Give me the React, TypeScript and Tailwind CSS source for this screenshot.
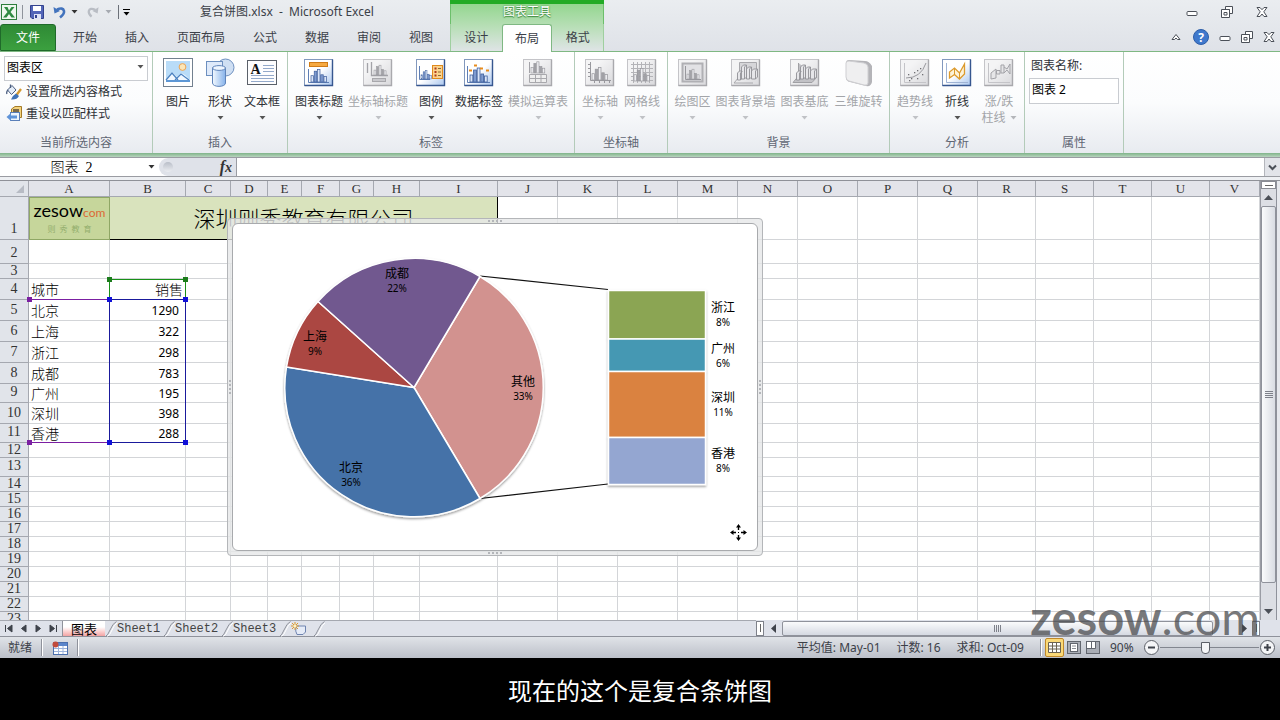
import type { ReactNode } from 'react';

/**
 * @file App.tsx
 * @description Spreadsheet window: ribbon, formula bar, sheet with a bar-of-pie chart, status bar and caption strip.
 */

const UI_FONT = "font-['Noto_Sans','Noto_Sans_CJK_SC',sans-serif]";
const HEAD_FONT = "font-['Liberation_Serif','Noto_Sans_CJK_SC',serif]";

/* ---------- small glyphs ---------- */

function Caret({ className = 'text-[#555]' }: { className?: string }) {
  return (
    <svg width="7" height="4" viewBox="0 0 7 4" className={className} aria-hidden>
      <path d="M0.5 0H6.5L3.5 3.5Z" fill="currentColor" />
    </svg>
  );
}

function MinimizeIcon() {
  return (
    <svg width="12" height="12" viewBox="0 0 12 12" aria-hidden>
      <rect x="1" y="5.5" width="10" height="4" rx="1" fill="#fff" stroke="#4b5058" />
    </svg>
  );
}

function RestoreIcon() {
  return (
    <svg width="12" height="12" viewBox="0 0 12 12" fill="#fff" stroke="#4b5058" aria-hidden>
      <path d="M4.5 0.5H11.5V7.5H8.5V3.5H4.5Z" />
      <path d="M0.5 3.5H8.5V11.5H0.5Z" />
      <path d="M3 6.5H6V9H3Z" />
    </svg>
  );
}

function CloseIcon() {
  return (
    <svg width="12" height="12" viewBox="0 0 12 12" aria-hidden>
      <path
        d="M1 1.5H4L6 3.7L8 1.5H11L7.8 5.8L11 10.5H8L6 8L4 10.5H1L4.2 5.8Z"
        fill="#fff"
        stroke="#4b5058"
      />
    </svg>
  );
}

/* ---------- ribbon icons ---------- */

interface FrameProps {
  off?: boolean;
  children: ReactNode;
}

function Frame({ off, children }: FrameProps) {
  return (
    <svg width="30" height="30" viewBox="0 0 30 30" aria-hidden>
      <defs>
        <linearGradient id="frameOn" x1="0" y1="0" x2="1" y2="1">
          <stop offset="0.5" stopColor="#ffffff" />
          <stop offset="1" stopColor="#a9c6ee" />
        </linearGradient>
        <linearGradient id="frameOff" x1="0" y1="0" x2="1" y2="1">
          <stop offset="0.3" stopColor="#f4f4f5" />
          <stop offset="1" stopColor="#d9d9dc" />
        </linearGradient>
      </defs>
      <rect
        x="0.5"
        y="1.5"
        width="28"
        height="26"
        fill={off ? 'url(#frameOff)' : 'url(#frameOn)'}
        stroke={off ? '#c4c4c8' : '#8298bd'}
      />
      <path d="M28.5 1.5V27.5H0.5" fill="none" stroke={off ? '#a9a9ad' : '#36568f'} strokeWidth="1.4" />
      {children}
    </svg>
  );
}

interface BarsProps {
  x: number;
  y: number;
  off?: boolean;
  scale?: number;
}

/** Five clustered columns standing on y. */
function Bars({ x, y, off, scale = 1 }: BarsProps) {
  const heights = [7, 12, 14, 8, 6];
  return (
    <g transform={`translate(${x} ${y}) scale(${scale})`} strokeWidth="0.8">
      {heights.map((h, i) => (
        <rect
          key={i}
          x={i * 3.6}
          y={-h}
          width="2.8"
          height={h}
          fill={i % 2 ? (off ? '#a3a3a8' : '#7e9bd0') : off ? '#ededf0' : '#dbe6f8'}
          stroke={off ? '#98989d' : '#3f5f9d'}
        />
      ))}
    </g>
  );
}

/** Row of boxes with a slanted top, for the 3-D chart buttons. */
function Blocks() {
  return (
    <g fill="#e6e6e9" stroke="#919196" strokeWidth="0.9">
      <path d="M6.5 22V15L8.5 13H11.5V20L9.5 22Z" />
      <path d="M10.5 21V9L12.5 7H15.5V19L13.5 21Z" />
      <path d="M15.5 21V11L17.5 9H20.5V19L18.5 21Z" />
      <path d="M20.5 21V13L22.5 11H26.5V19L24.500 21Z" />
      <path d="M9.5 22V15L11.5 13M13.5 21V9L15.5 7M18.5 21V11L20.5 9M24.5 21V13L26.5 11" fill="none" />
    </g>
  );
}

function PictureIcon() {
  return (
    <svg width="30" height="30" viewBox="0 0 30 30" aria-hidden>
      <rect x="0.5" y="0.5" width="29" height="28" fill="#fff" stroke="#72808f" />
      <rect x="3" y="3" width="24" height="21" fill="#b9dcf8" />
      <circle cx="19.5" cy="9" r="3.4" fill="#fce6b8" stroke="#eda453" />
      <path d="M3 21L9 14L14 19L18 15L22 17L27 22V24H3Z" fill="#f1f8ff" />
      <path d="M3 22L9 15L15 22M12 22L18 16L26 22" fill="none" stroke="#4c83c2" strokeWidth="1.3" />
      <path d="M3 22H27V24H3Z" fill="#5d97d5" />
    </svg>
  );
}

function ShapesIcon() {
  return (
    <svg width="30" height="30" viewBox="0 0 30 30" aria-hidden>
      <defs>
        <linearGradient id="can" x1="0" x2="1">
          <stop offset="0" stopColor="#f3f9ff" />
          <stop offset="1" stopColor="#86b2ea" />
        </linearGradient>
      </defs>
      <circle cx="20.5" cy="9.5" r="8.5" fill="#cfdff3" stroke="#6d8fbf" />
      <rect x="1.5" y="3.5" width="16" height="14" fill="#dfeafa" stroke="#6d8fbf" />
      <path d="M7.5 10V25C7.5 29.5 20.5 29.5 20.5 25V10Z" fill="url(#can)" stroke="#5f84ba" />
      <ellipse cx="14" cy="10" rx="6.5" ry="2.4" fill="#eef5fe" stroke="#5f84ba" />
    </svg>
  );
}

function TextBoxIcon() {
  return (
    <svg width="30" height="30" viewBox="0 0 30 30" aria-hidden>
      <rect x="0.5" y="2.5" width="29" height="24" fill="#fdfdfe" stroke="#5a6069" />
      <path d="M16 7.5H27M16 10.5H27M16 13.5H27M4 17.5H27M4 20.500H27M4 23.5H27" stroke="#93a9ca" />
      <text x="3.5" y="16" fontFamily="Liberation Serif, serif" fontWeight="700" fontSize="14" fill="#111">
        A
      </text>
    </svg>
  );
}

function ChartTitleIcon() {
  return (
    <Frame>
      <rect x="5.5" y="4.5" width="18" height="4" fill="#f6a941" stroke="#cf7b17" />
      <path d="M4.5 11V24.5H25" fill="none" stroke="#5f7fb5" />
      <Bars x={7} y={24} scale={0.9} />
    </Frame>
  );
}

function AxisTitleIcon() {
  return (
    <Frame off>
      <path d="M4.5 5V15M8.5 4V17.5H25" fill="none" stroke="#a3a3a8" strokeWidth="1.3" />
      <Bars x={11} y={17} off scale={0.7} />
      <rect x="9.5" y="20.5" width="13" height="3" fill="#c9c9cd" stroke="#a8a8ac" />
    </Frame>
  );
}

function LegendIcon() {
  return (
    <Frame>
      <path d="M3.5 8V21.5H14" fill="none" stroke="#5f7fb5" />
      <Bars x={5} y={21} scale={0.6} />
      <rect x="16.5" y="7.5" width="10" height="13" fill="#fbd38c" stroke="#e08a1c" />
      <path d="M18.5 10.5H20.5M18.5 14H20.5M18.5 17.5H20.5" stroke="#b03a1a" strokeWidth="1.8" />
      <path d="M22 10.5H25M22 14H25M22 17.5H25" stroke="#8b6a35" />
    </Frame>
  );
}

function DataLabelIcon() {
  return (
    <Frame>
      <path d="M3.5 8V24.5H26" fill="none" stroke="#5f7fb5" />
      <Bars x={6} y={24} />
      <path d="M5 12.5H8M10 7.5H13M16 10.5H19M22 12.5H25" stroke="#e88c1c" strokeWidth="2.2" />
    </Frame>
  );
}

function DataTableIcon() {
  return (
    <Frame off>
      <path d="M6.5 4V15" stroke="#a3a3a8" />
      <Bars x={8} y={15} off scale={0.8} />
      <path
        d="M6.5 16.5H23.5V24.5H6.5ZM6.5 20.5H23.5M12.5 16.5V24.5M18 16.5V24.5"
        fill="#eee"
        stroke="#a8a8ac"
      />
    </Frame>
  );
}

function AxesIcon() {
  return (
    <Frame off>
      <path
        d="M5.5 4V22.5H26M3 6.5H5M3 10.5H5M3 14.5H5M3 18.5H5M9.5 23V25M14.5 23V25M19.5 23V25M24.5 23V25"
        fill="none"
        stroke="#98989d"
      />
      <Bars x={7} y={22} off scale={0.9} />
    </Frame>
  );
}

function GridlinesIcon() {
  return (
    <Frame off>
      <path
        d="M4 6.5H26M4 10.5H26M4 14.5H26M4 18.5H26M4 22.5H26M6.5 4V25M10.5 4V25M14.5 4V25M18.5 4V25M22.5 4V25"
        stroke="#b4b4b8"
      />
      <Bars x={7} y={23} off scale={0.9} />
    </Frame>
  );
}

function PlotAreaIcon() {
  return (
    <Frame off>
      <rect x="4.5" y="5.5" width="20" height="18" fill="#e2e2e5" stroke="#b0b0b4" strokeWidth="2" />
      <path d="M7.5 8V21.5H23" fill="none" stroke="#98989d" />
      <Bars x={9} y={21} off scale={0.7} />
    </Frame>
  );
}

function ChartWallIcon() {
  return (
    <Frame off>
      <path d="M8.5 4.5H25.5V18.5H8.5Z" fill="#d6d6d9" stroke="#a8a8ac" />
      <path d="M8.5 18.5L3 25H22" fill="none" stroke="#a8a8ac" />
      <Blocks />
    </Frame>
  );
}

function ChartFloorIcon() {
  return (
    <Frame off>
      <path d="M8.5 5V18L3 24.500H22L27 19" fill="#c2c2c6" stroke="#a0a0a4" />
      <Blocks />
    </Frame>
  );
}

function RotateIcon() {
  return (
    <svg width="30" height="30" viewBox="0 0 30 30" aria-hidden>
      <path d="M2 5Q2 2 5 2L21 3Q25 3 28 8V24Q27 29 22 28L6 24Q2 23 2 20Z" fill="#b4b4b8" />
      <path d="M2 5Q2 3 5 3L20 5Q24 6 24 9V25Q24 28 20 27L5 23Q2 22 2 19Z" fill="#efeff0" stroke="#cfcfd2" />
    </svg>
  );
}

const TREND_POINTS = [[8, 16], [11, 20], [14, 14], [17, 20], [20, 10], [22, 16], [9, 22], [17, 12]];

function TrendIcon() {
  return (
    <Frame off>
      <path d="M4.5 5V24.5H26" fill="none" stroke="#c4c4c8" />
      <path d="M6 20Q21 20 26 5" fill="none" stroke="#98989d" />
      {TREND_POINTS.map(([x, y]) => (
        <rect key={`${x}-${y}`} x={x} y={y} width="1.3" height="1.3" fill="#707075" />
      ))}
    </Frame>
  );
}

function LinesIcon() {
  return (
    <Frame>
      <path d="M4.5 5V24.5H26" fill="none" stroke="#9fb3d4" />
      <path
        d="M7.5 20V14L12.5 10L17.5 15L22.5 6V16L17.5 21L12.5 16.5Z"
        fill="#fdf3d9"
        stroke="#dc9a2c"
        strokeWidth="1.3"
      />
      <path d="M12.5 10V17M17.5 15V21" stroke="#dc9a2c" />
    </Frame>
  );
}

function UpDownIcon() {
  return (
    <Frame off>
      <path d="M4.5 5V24.5H26" fill="none" stroke="#c4c4c8" />
      <path
        d="M7 21V15L12 11V20ZM12.5 12.5H16V16H12.5ZM17 7H20V15H17ZM20 9L23 11L26 6V16L23 12L20 15"
        fill="#e6e6e8"
        stroke="#a3a3a8"
      />
    </Frame>
  );
}

/* ---------- ribbon ---------- */

interface RibbonItem {
  label: string;
  width: string;
  icon: ReactNode;
  off?: boolean;
  noMenu?: boolean;
  second?: string;
}

interface RibbonGroupData {
  title: string;
  width: string;
  items: RibbonItem[];
}

const GROUPS: RibbonGroupData[] = [
  {
    title: '插入',
    width: 'w-[135px]',
    items: [
      { label: '图片', width: 'w-[42px]', icon: <PictureIcon />, noMenu: true },
      { label: '形状', width: 'w-[42px]', icon: <ShapesIcon /> },
      { label: '文本框', width: 'w-[42px]', icon: <TextBoxIcon /> },
    ],
  },
  {
    title: '标签',
    width: 'w-[287px]',
    items: [
      { label: '图表标题', width: 'w-[54px]', icon: <ChartTitleIcon /> },
      { label: '坐标轴标题', width: 'w-[64px]', icon: <AxisTitleIcon />, off: true },
      { label: '图例', width: 'w-[42px]', icon: <LegendIcon /> },
      { label: '数据标签', width: 'w-[54px]', icon: <DataLabelIcon /> },
      { label: '模拟运算表', width: 'w-[64px]', icon: <DataTableIcon />, off: true },
    ],
  },
  {
    title: '坐标轴',
    width: 'w-[93px]',
    items: [
      { label: '坐标轴', width: 'w-[42px]', icon: <AxesIcon />, off: true },
      { label: '网格线', width: 'w-[42px]', icon: <GridlinesIcon />, off: true },
    ],
  },
  {
    title: '背景',
    width: 'w-[222px]',
    items: [
      { label: '绘图区', width: 'w-[42px]', icon: <PlotAreaIcon />, off: true },
      { label: '图表背景墙', width: 'w-[64px]', icon: <ChartWallIcon />, off: true },
      { label: '图表基底', width: 'w-[54px]', icon: <ChartFloorIcon />, off: true },
      { label: '三维旋转', width: 'w-[54px]', icon: <RotateIcon />, off: true, noMenu: true },
    ],
  },
  {
    title: '分析',
    width: 'w-[135px]',
    items: [
      { label: '趋势线', width: 'w-[42px]', icon: <TrendIcon />, off: true },
      { label: '折线', width: 'w-[42px]', icon: <LinesIcon /> },
      { label: '涨/跌', width: 'w-[42px]', icon: <UpDownIcon />, off: true, second: '柱线' },
    ],
  },
];

function RibbonGroup({ title, width, children }: { title: string; width: string; children: ReactNode }) {
  return (
    <section className={`flex shrink-0 flex-col border-r border-[#b3cbb9] ${width}`} aria-label={title}>
      <div className="flex-1">{children}</div>
      <h2 className="pb-0.5 text-center text-[12px] leading-4 text-[#5f6673]">{title}</h2>
    </section>
  );
}

function RibbonButton({ label, width, icon, off, noMenu, second }: RibbonItem) {
  const tone = off ? 'text-[#a3a5a9]' : 'text-[#2e3136]';
  return (
    <button type="button" disabled={off} className={`flex shrink-0 flex-col items-center ${width} ${tone}`}>
      {icon}
      <span className="mt-1.5 whitespace-nowrap text-[12px] leading-4">{label}</span>
      {second ? (
        <span className="flex items-center gap-1 whitespace-nowrap text-[12px] leading-4">
          {second}
          <Caret className="text-[#b4b6ba]" />
        </span>
      ) : (
        !noMenu && (
          <span className="pt-1.5">
            <Caret className={off ? 'text-[#c0c2c6]' : 'text-[#555]'} />
          </span>
        )
      )}
    </button>
  );
}

function Ribbon() {
  return (
    <div className="flex h-[102px] shrink-0 overflow-hidden border-t border-[#7fb883] bg-gradient-to-b from-white via-[#fbfcfd] to-[#e8ebf0]">
      <RibbonGroup title="当前所选内容" width="w-[153px]">
        <div className="flex flex-col px-1 pt-0.5">
          <div className="relative">
            <select
              aria-label="图表元素"
              className="h-[25px] w-full appearance-none border border-[#c9ccd1] bg-white px-0.5 text-[12px] text-black"
            >
              <option>图表区</option>
            </select>
            <span className="pointer-events-none absolute inset-y-0 right-1 flex items-center">
              <Caret />
            </span>
          </div>
          <button type="button" className="flex h-[22px] items-center gap-1 pl-0.5 text-[12px] text-[#2e3136]">
            <svg width="16" height="16" viewBox="0 0 16 16" aria-hidden>
              <path d="M1.500 6L6 1.500L10 6L5.500 10.500Z" fill="#e3ecf8" stroke="#4b5e80" />
              <path d="M4.5 4V0.5M2 6Q0 8 1 10" fill="none" stroke="#4b5e80" strokeWidth="1.3" />
              <path d="M15 5L10.500 11" stroke="#d59a32" strokeWidth="2.4" />
              <path d="M10 9.500Q7 11 5 15.500Q11 16 13 12Z" fill="#3f73b8" />
            </svg>
            设置所选内容格式
          </button>
          <button type="button" className="flex h-[22px] items-center gap-1 pl-0.5 text-[12px] text-[#2e3136]">
            <svg width="16" height="16" viewBox="0 0 16 16" aria-hidden>
              <path d="M5.500 3L9 0.500H15.500V11.500H5.500Z" fill="#f3d27c" stroke="#a57b26" />
              <path d="M7 3H13V6H7Z" fill="#7d6a4a" />
              <rect x="4.500" y="6.500" width="9" height="8" fill="#eef4fc" stroke="#5b7fb8" />
              <path d="M0.500 11L5 7V9.500H11V12.500H5V15Z" fill="#5f93d8" />
            </svg>
            重设以匹配样式
          </button>
        </div>
      </RibbonGroup>

      {GROUPS.map((group) => (
        <RibbonGroup key={group.title} title={group.title} width={group.width}>
          <div className="flex justify-center pt-1.5">
            {group.items.map((item) => (
              <RibbonButton key={item.label} {...item} />
            ))}
          </div>
        </RibbonGroup>
      ))}

      <RibbonGroup title="属性" width="w-[99px]">
        <label className="flex flex-col gap-1 px-1 pt-1.5 text-[12px] leading-4 text-[#2e3136]">
          <span className="pl-0.5">图表名称:</span>
          <input
            type="text"
            defaultValue="图表 2"
            className="h-[26px] w-full border border-[#c9ccd1] bg-white px-0.5 pb-1 text-[12px] text-black"
          />
        </label>
      </RibbonGroup>
    </div>
  );
}

/* ---------- title bar and tabs ---------- */

const MAIN_TABS = ['开始', '插入', '页面布局', '公式', '数据', '审阅', '视图'];

function Header() {
  return (
    <header className="flex h-[51px] shrink-0 bg-gradient-to-b from-[#eaedf0] to-[#dfe2e8] text-[12px] text-[#3b4048]">
      <div className="flex w-[450px] shrink-0 flex-col">
        <div className="flex h-6 items-center">
          <div className="flex w-[200px] shrink-0 items-center">
            <svg width="18" height="18" viewBox="0 0 18 18" aria-hidden>
              <rect x="1.5" y="1.5" width="15" height="15" fill="#eef7ee" stroke="#2e7d3c" />
              <path d="M4 4H7.5L9 7.500L11.500 4H14.500L10.500 9L15 14.500H11.500L9 11L6.500 14.500H3L7.500 9Z" fill="#2f8a41" />
            </svg>
            <span className="ml-1 h-3.5 w-px bg-[#8e939b]" />
            <button type="button" aria-label="保存" className="ml-1.5">
              <svg width="16" height="16" viewBox="0 0 16 16" aria-hidden>
                <path d="M1.5 1.5H14.5V14.5H3L1.5 13Z" fill="#5366b8" stroke="#33428e" />
                <rect x="4" y="2" width="8" height="5" fill="#fff" />
                <rect x="5" y="10" width="7" height="5" fill="#dfe4f5" />
                <rect x="6" y="11" width="2" height="3" fill="#33428e" />
              </svg>
            </button>
            <button type="button" aria-label="撤消" className="ml-2 flex items-center gap-1">
              <svg width="14" height="14" viewBox="0 0 14 14" aria-hidden>
                <path d="M4 4.5Q10 2 11 6Q11.5 9 7 12.5" fill="none" stroke="#4273bd" strokeWidth="2.6" />
                <path d="M0.5 2L1.5 8.5L7 6Z" fill="#4273bd" />
              </svg>
              <Caret className="text-[#333]" />
            </button>
            <button type="button" aria-label="恢复" className="ml-2 flex items-center gap-1.5">
              <svg width="13" height="14" viewBox="0 0 14 14" aria-hidden>
                <path d="M10 4.5Q4 2 3 6Q2.5 9 6 12" fill="none" stroke="#b9bdc4" strokeWidth="2.4" />
                <path d="M13.5 2L12.5 8.5L7 6Z" fill="#b9bdc4" />
              </svg>
              <Caret className="text-[#a6aab1]" />
            </button>
            <span className="ml-1.5 h-3.5 w-px bg-[#6b7078]" />
            <button type="button" aria-label="自定义快速访问工具栏" className="ml-1 flex flex-col items-center gap-0.5">
              <span className="h-px w-[7px] bg-black" />
              <Caret className="text-black" />
            </button>
          </div>
          <h1 className="whitespace-pre text-[12px]">复合饼图.xlsx  -  Microsoft Excel</h1>
        </div>
        <nav className="flex flex-1">
          <button
            type="button"
            className="mr-[3px] w-14 rounded-t-[3px] border border-[#1f6a2a] bg-gradient-to-b from-[#2f8a35] to-[#3ba03f] text-white"
          >
            文件
          </button>
          {MAIN_TABS.map((tab) => (
            <button key={tab} type="button" className="px-3.5">
              {tab}
            </button>
          ))}
        </nav>
      </div>

      <div className="flex w-[154px] shrink-0 flex-col border-t-4 border-[#22ab25] bg-gradient-to-b from-[#93d68f] via-[#b9dfb8] to-[#dfe4e6]">
        <p className="flex h-5 items-start justify-center border-x border-[#6cbf6b] leading-4 text-white [text-shadow:0_0_2px_#3f8a3f,0_1px_1px_#3f8a3f]">
          图表工具
        </p>
        <nav className="grid flex-1 grid-cols-3 border-x border-[#9fcf9f]">
          <button type="button">设计</button>
          <button
            type="button"
            className="relative -mb-px rounded-t-[3px] border border-b-0 border-[#7fb883] bg-white"
          >
            布局
          </button>
          <button type="button">格式</button>
        </nav>
      </div>

      <div className="flex flex-1 flex-col items-end">
        <div className="flex h-[23px] items-center gap-[23px] pr-3">
          <button type="button" aria-label="最小化"><MinimizeIcon /></button>
          <button type="button" aria-label="还原"><RestoreIcon /></button>
          <button type="button" aria-label="关闭"><CloseIcon /></button>
        </div>
        <div className="flex flex-1 items-center gap-2.5 pr-[5px]">
          <button type="button" aria-label="折叠功能区" className="mr-0.5">
            <svg width="10" height="8" viewBox="0 0 10 8" aria-hidden>
              <path d="M1 6.5L5 1.5L9 6.5H6.5L5 5L3.5 6.5Z" fill="#fff" stroke="#4b5058" />
            </svg>
          </button>
          <button type="button" aria-label="帮助">
            <svg width="16" height="16" viewBox="0 0 16 16" aria-hidden>
              <circle cx="8" cy="8" r="7.5" fill="#3f78cc" stroke="#2d5ea8" />
              <text x="8" y="12.5" textAnchor="middle" fontSize="12" fontWeight="700" fill="#fff">?</text>
            </svg>
          </button>
          <button type="button" aria-label="最小化工作簿"><MinimizeIcon /></button>
          <button type="button" aria-label="还原工作簿"><RestoreIcon /></button>
          <button type="button" aria-label="关闭工作簿"><CloseIcon /></button>
        </div>
      </div>
    </header>
  );
}

function FormulaBar() {
  return (
    <>
      <div className="h-1 shrink-0 bg-gradient-to-b from-[#7fb489] to-[#b9d4bf]" />
      <div className="flex h-5 shrink-0 border-y border-[#9a9ca2] bg-white">
        <input
          type="text"
          aria-label="名称框"
          defaultValue="图表  2"
          className={`w-[143px] pt-0.5 text-center text-[14px] font-light leading-4 text-black ${HEAD_FONT}`}
        />
        <button type="button" aria-label="名称列表" className="flex w-4 items-center justify-center">
          <Caret className="text-[#333]" />
        </button>
        <div className="flex w-[78px] items-center justify-between rounded-l-full border-r border-[#9a9ca2] bg-[#dfe2e9] pl-1 pr-1">
          <span className="size-2.5 rounded-full bg-gradient-to-b from-[#b9bec8] to-[#eceef2]" />
          <button
            type="button"
            aria-label="插入函数"
            className="font-['Liberation_Serif',serif] text-[16px] font-bold italic leading-4 text-[#333]"
          >
            f<span className="text-[14px]">x</span>
          </button>
        </div>
        <input type="text" aria-label="编辑栏" className="min-w-0 flex-1 px-1 text-[12px]" />
        <button
          type="button"
          aria-label="展开编辑栏"
          className="flex w-4 items-center justify-center border-l border-[#b4b6bc] bg-[#e2e4e9]"
        >
          <svg width="9" height="7" viewBox="0 0 9 7" aria-hidden>
            <path d="M1 1.5L4.5 5L8 1.5" fill="none" stroke="#4b5058" strokeWidth="2" />
          </svg>
        </button>
      </div>
      <div className="h-1 shrink-0 border-b border-[#8f9198] bg-[#eef0f3]" />
    </>
  );
}

/* ---------- sheet ---------- */

const COLUMNS: [string, number | undefined][] = [
  ['A', 81], ['B', 76], ['C', 45], ['D', 37], ['E', 34], ['F', 38], ['G', 34], ['H', 46], ['I', 78],
  ['J', 60], ['K', 60], ['L', 60], ['M', 60], ['N', 60], ['O', 60], ['P', 60], ['Q', 60],
  ['R', 58], ['S', 58], ['T', 58], ['U', 58], ['V', undefined],
];

const ROW_HEIGHTS = [43, 24, 15, 21, 21, 21, 21, 21, 19, 21, 19, 15, 19, 15, 15, 15, 15, 15, 15, 15, 15, 15, 15];

const DATA: Record<number, [string, string]> = {
  4: ['城市', '销售'],
  5: ['北京', '1290'],
  6: ['上海', '322'],
  7: ['浙江', '298'],
  8: ['成都', '783'],
  9: ['广州', '195'],
  10: ['深圳', '398'],
  11: ['香港', '288'],
};

const CELL = 'border-b border-r border-[#d3d5d8] p-0';

function SheetRow({ row, height }: { row: number; height: number }) {
  const entry = DATA[row];
  const rest = COLUMNS.slice(row <= 2 ? 9 : 2);
  return (
    <tr style={{ height }}>
      <th
        scope="row"
        className={`border-b border-r border-[#a5a8b0] bg-[#e1e4ea] p-0 align-bottom text-[14px] font-normal leading-[14px] text-[#333] ${HEAD_FONT}`}
      >
        <div className={height > 15 ? 'h-[17px]' : 'h-[14px]'}>{row}</div>
      </th>
      {row === 1 && (
        <>
          <td className="border border-[#8fa765] bg-[#c6d69b] p-0 text-center align-top">
            <div className="flex flex-col items-center font-['Lato',sans-serif] leading-6">
              <span className="text-[18px] text-black">
                zesow<span className="text-[12px] text-[#dc6a35]">com</span>
              </span>
              <span className="flex gap-1 font-['Noto_Sans_CJK_SC',sans-serif] text-[8px] leading-[8px] text-[#93ae6d]">
                <span>则</span><span>秀</span><span>教</span><span>育</span>
              </span>
            </div>
          </td>
          <td
            colSpan={8}
            className="border-b border-r border-black bg-[#d9e3bd] p-0 text-center text-[22px] font-light leading-8 text-black"
          >
            深圳则秀教育有限公司
          </td>
        </>
      )}
      {row === 2 && (
        <>
          <td className={CELL} />
          <td colSpan={8} className={CELL} />
        </>
      )}
      {row > 2 && (
        <>
          <td className={`${CELL} pl-0.5 pt-0.5 text-left text-[14px] font-light leading-4 text-black`}>
            {entry?.[0]}
          </td>
          <td
            className={`${CELL} pt-0.5 text-right leading-4 text-black ${
              row === 4 ? 'pr-0.5 text-[14px] font-light' : 'pr-1.5 text-[12px]'
            }`}
          >
            {entry?.[1]}
          </td>
        </>
      )}
      {rest.map(([name]) => (
        <td key={name} className={CELL} />
      ))}
    </tr>
  );
}

function Handles({ className }: { className: string }) {
  return (
    <>
      <i className={`absolute -left-[3px] -top-[3px] size-[5px] ${className}`} />
      <i className={`absolute -right-[3px] -top-[3px] size-[5px] ${className}`} />
      <i className={`absolute -bottom-[3px] -left-[3px] size-[5px] ${className}`} />
      <i className={`absolute -bottom-[3px] -right-[3px] size-[5px] ${className}`} />
    </>
  );
}

/** Coloured outlines round the ranges that feed the chart. */
function RangeOutlines() {
  return (
    <>
      <div className="absolute left-[109px] top-[98px] h-[21px] w-[77px] border border-[#189018]">
        <Handles className="bg-[#1c7c1c]" />
      </div>
      <div className="absolute left-[30px] top-[118px] h-[144px] w-[79px] border-y border-[#7b1fa2]">
        <Handles className="bg-[#7b1fa2]" />
      </div>
      <div className="absolute left-[109px] top-[118px] h-[144px] w-[77px] border border-[#1a1a9c]">
        <Handles className="bg-[#1010d8]" />
      </div>
    </>
  );
}

/* ---------- chart ---------- */

const CX = 414;
const CY = 387.5;
const R = 129;

const SLICES = [
  { name: '其他', pct: '33%', color: '#d2928f', from: [480, 276.5], to: [480, 498.5], at: [523, 386] },
  { name: '北京', pct: '36%', color: '#4472a8', from: [480, 498.5], to: [286.5, 367], at: [351, 472] },
  { name: '上海', pct: '9%', color: '#ab4643', from: [286.5, 367], to: [318, 301.5], at: [315, 341] },
  { name: '成都', pct: '22%', color: '#71588f', from: [318, 301.5], to: [480, 276.5], at: [397, 278] },
];

const SEGMENTS = [
  { name: '浙江', pct: '8%', color: '#8ba552', y: 290.5, h: 48.5, labelY: 312 },
  { name: '广州', pct: '6%', color: '#4498b3', y: 339, h: 32.5, labelY: 353 },
  { name: '深圳', pct: '11%', color: '#da823f', y: 371.5, h: 66, labelY: 402 },
  { name: '香港', pct: '8%', color: '#94a6d1', y: 437.5, h: 47, labelY: 458 },
];

function ChartLabel({ x, y, name, pct }: { x: number; y: number; name: string; pct: string }) {
  return (
    <g textAnchor="middle" fill="#000">
      <text x={x} y={y} fontSize="12">{name}</text>
      <text x={x} y={y + 14} fontSize="10">{pct}</text>
    </g>
  );
}

function BarOfPie() {
  return (
    <svg
      viewBox="233 224 524 326"
      width="524"
      height="326"
      role="img"
      aria-label="各城市销售占比"
      className="rounded-[8px] bg-white"
    >
      <defs>
        <filter id="soft" x="-10%" y="-10%" width="120%" height="120%">
          <feDropShadow dx="0" dy="1.5" stdDeviation="1.2" floodColor="#000" floodOpacity="0.4" />
        </filter>
      </defs>
      <path d="M480 276L608 289.5M480 498.5L608 484" stroke="#111" strokeWidth="1.2" />
      <g filter="url(#soft)" stroke="#fff" strokeWidth="1.5" strokeLinejoin="round">
        {SLICES.map((s) => (
          <path
            key={s.name}
            d={`M${CX} ${CY}L${s.from[0]} ${s.from[1]}A${R} ${R} 0 0 1 ${s.to[0]} ${s.to[1]}Z`}
            fill={s.color}
          />
        ))}
      </g>
      <g filter="url(#soft)" stroke="#fff" strokeWidth="1.5">
        {SEGMENTS.map((s) => (
          <rect key={s.name} x="608.5" y={s.y} width="97" height={s.h} fill={s.color} />
        ))}
      </g>
      {SLICES.map((s) => (
        <ChartLabel key={s.name} x={s.at[0]} y={s.at[1]} name={s.name} pct={s.pct} />
      ))}
      {SEGMENTS.map((s) => (
        <ChartLabel key={s.name} x={723} y={s.labelY} name={s.name} pct={s.pct} />
      ))}
      {/* move cursor */}
      <path d="M738.5 527V530M738.5 535V538M733 532.5H736M741 532.5H744" stroke="#000" strokeWidth="1.4" />
      <path d="M738.5 524L741 527.5H736ZM738.5 541L741 537.5H736ZM730 532.5L733.5 530V535ZM747 532.5L743.5 530V535Z" />
      <path d="M738 532h1v1h-1z" />
    </svg>
  );
}

function Grip({ className }: { className: string }) {
  return (
    <span className={`absolute flex gap-[2px] ${className}`}>
      <i className="size-[2px] bg-[#b4b6ba]" />
      <i className="size-[2px] bg-[#b4b6ba]" />
      <i className="size-[2px] bg-[#b4b6ba]" />
      <i className="size-[2px] bg-[#b4b6ba]" />
    </span>
  );
}

function ChartObject() {
  return (
    <div className="absolute left-[227px] top-[37px] rounded-[4px] border border-[#b4b6b9] bg-[#e6e7e9]/80 p-1">
      <div className="overflow-hidden rounded-[6px] border border-[#a8aaad] bg-white">
        <BarOfPie />
      </div>
      <Grip className="left-1/2 top-px -translate-x-1/2" />
      <Grip className="bottom-px left-1/2 -translate-x-1/2" />
      <Grip className="left-px top-1/2 -translate-y-1/2 flex-col" />
      <Grip className="right-px top-1/2 -translate-y-1/2 flex-col" />
    </div>
  );
}

function VerticalScroll() {
  return (
    <div className="flex w-5 shrink-0 border-l border-[#9a9ca4] bg-[#dcdee4]">
      <div className="flex w-[15px] flex-col items-center">
        <span className="flex h-2 w-[15px] items-center justify-center border border-[#8a8c94] bg-white">
          <i className="h-px w-2 bg-[#666]" />
        </span>
        <button type="button" aria-label="向上滚动" className="flex h-[17px] items-center">
          <svg width="9" height="5" viewBox="0 0 9 5" aria-hidden><path d="M0 5H9L4.5 0Z" fill="#4b4f57" /></svg>
        </button>
        <div className="flex w-full flex-1 flex-col items-center justify-center gap-px rounded-[2px] border border-[#8f929b] bg-gradient-to-r from-[#fafbfc] to-[#d9dce3]">
          <i className="h-px w-2 bg-[#7e818a]" />
          <i className="h-px w-2 bg-[#7e818a]" />
          <i className="h-px w-2 bg-[#7e818a]" />
          <i className="h-px w-2 bg-[#7e818a]" />
        </div>
        <div className="h-5" />
        <button type="button" aria-label="向下滚动" className="flex h-[17px] items-center">
          <svg width="9" height="5" viewBox="0 0 9 5" aria-hidden><path d="M0 0H9L4.5 5Z" fill="#4b4f57" /></svg>
        </button>
      </div>
      <div className="flex-1 border-l border-[#8f929b] bg-[#e6e8ed]" />
    </div>
  );
}

function Sheet() {
  return (
    <main className="flex min-h-0 flex-1">
      <div className="relative min-w-0 flex-1 overflow-hidden bg-white">
        <table className="w-full table-fixed border-separate border-spacing-0">
          <colgroup>
            <col className="w-[29px]" />
            {COLUMNS.map(([name, width]) => (
              <col key={name} style={{ width }} />
            ))}
          </colgroup>
          <thead>
            <tr className="h-4">
              <th className="border-b border-r border-[#a5a8b0] bg-[#e1e4ea] p-0">
                <svg width="8" height="8" viewBox="0 0 8 8" className="ml-auto mr-1" aria-hidden>
                  <path d="M8 0V8H0Z" fill="#b7bbc4" />
                </svg>
              </th>
              {COLUMNS.map(([name]) => (
                <th
                  key={name}
                  scope="col"
                  className={`border-b border-r border-[#a5a8b0] bg-[#e3e4ea] p-0 text-[13px] font-normal leading-[15px] text-[#333] ${HEAD_FONT}`}
                >
                  {name}
                </th>
              ))}
            </tr>
          </thead>
          <tbody>
            {ROW_HEIGHTS.map((height, i) => (
              <SheetRow key={i} row={i + 1} height={height} />
            ))}
          </tbody>
        </table>
        <RangeOutlines />
        <ChartObject />
      </div>
      <VerticalScroll />
    </main>
  );
}

/* ---------- bottom bars ---------- */

function Slash() {
  return (
    <svg width="12" height="17" viewBox="0 0 12 17" className="shrink-0" aria-hidden>
      <path d="M0.5 15.5Q3 14 5 9Q8 2 11.5 0.5" fill="none" stroke="#8f929b" />
      <path d="M2.5 15.5Q5 14 7 9Q9 4 12 2" fill="none" stroke="#fff" />
    </svg>
  );
}

const NAV_ARROWS = [
  { name: '第一张', d: 'M1.5 1V8M8 1V8L3.5 4.5Z' },
  { name: '上一张', d: 'M7 1V8L2.5 4.5Z' },
  { name: '下一张', d: 'M3 1V8L7.5 4.5Z' },
  { name: '最后一张', d: 'M8.5 1V8M2 1V8L6.5 4.5Z' },
];

function SheetTabs() {
  return (
    <div className="relative flex h-[17px] shrink-0 border-b border-[#8f929b] bg-[#dfe2ea]">
      <div className="flex grow-[756] basis-0 border-t border-[#a5a8b0]">
        <div className="flex w-[63px] shrink-0 items-center justify-between border-r border-[#8f929b] px-1">
          {NAV_ARROWS.map((a) => (
            <button key={a.name} type="button" aria-label={a.name}>
              <svg width="10" height="9" viewBox="0 0 10 9" aria-hidden>
                <path d={a.d} fill="#3f434b" stroke="#3f434b" />
              </svg>
            </button>
          ))}
        </div>
        <button
          type="button"
          className="w-[42px] bg-gradient-to-b from-white from-40% to-[#f2a3a3] pt-px text-center text-[13px] leading-[14px] text-black"
        >
          图表
        </button>
        <Slash />
        {['Sheet1', 'Sheet2', 'Sheet3'].map((name) => (
          <div key={name} className="flex">
            <button
              type="button"
              className="w-[46px] pt-px text-left font-['Liberation_Mono',monospace] text-[12px] leading-[14px] text-[#444]"
            >
              {name}
            </button>
            <Slash />
          </div>
        ))}
        <button type="button" aria-label="插入工作表" className="flex w-[22px] items-center">
          <svg width="16" height="14" viewBox="0 0 16 14" aria-hidden>
            <path d="M5 4H14.5V10L12 12.5H6Q4 10 5 4Z" fill="#e5ebf7" stroke="#6f84b0" />
            <path d="M4 0V8M0 4H8M1 1L7 7M7 1L1 7" stroke="#dd9a2d" />
            <circle cx="4" cy="4" r="1.5" fill="#fff2c2" />
          </svg>
        </button>
        <Slash />
      </div>
      <div className="flex grow-[524] basis-0 items-center">
        <span className="flex h-[15px] w-2 items-center justify-center border border-[#7e818a] bg-white">
          <i className="h-2 w-px bg-[#666]" />
        </span>
        <button type="button" aria-label="向左滚动" className="flex w-[18px] justify-center">
          <svg width="5" height="9" viewBox="0 0 5 9" aria-hidden><path d="M5 0V9L0 4.5Z" fill="#3f434b" /></svg>
        </button>
        <div className="flex h-[15px] flex-1 items-center justify-center gap-px rounded-[2px] border border-[#8f929b] bg-gradient-to-b from-[#fafbfc] to-[#d5d9e2]">
          <i className="h-[7px] w-px bg-[#7e818a]" />
          <i className="h-[7px] w-px bg-[#7e818a]" />
          <i className="h-[7px] w-px bg-[#7e818a]" />
          <i className="h-[7px] w-px bg-[#7e818a]" />
        </div>
        <button type="button" aria-label="向右滚动" className="ml-6 flex w-[15px] justify-center">
          <svg width="5" height="9" viewBox="0 0 5 9" aria-hidden><path d="M0 0V9L5 4.5Z" fill="#3f434b" /></svg>
        </button>
        <span className="mr-5 flex h-[15px] w-2 items-center justify-center border border-[#7e818a] bg-white">
          <i className="h-2 w-px bg-[#666]" />
        </span>
      </div>
      <p className="pointer-events-none absolute bottom-0 right-5 font-['Lato',sans-serif] text-[47px] leading-[37px] text-[#4c4d50]/75">
        <span className="font-bold">zesow</span>.com
      </p>
    </div>
  );
}

function Divider() {
  return <span className="h-[17px] w-px bg-[#8f929b] shadow-[1px_0_0_#fff]" />;
}

function StatusBar() {
  return (
    <footer className="flex h-[21px] shrink-0 items-center bg-gradient-to-b from-[#e0e3e8] to-[#bcc0c9] text-[12px] leading-4 text-[#3b4048]">
      <span className="w-[41px] pl-2">就绪</span>
      <Divider />
      <button type="button" aria-label="录制宏" className="flex w-[35px] justify-center">
        <svg width="16" height="14" viewBox="0 0 16 14" aria-hidden>
          <rect x="1.5" y="1.5" width="14" height="12" fill="#fff" stroke="#4c70ae" />
          <rect x="2" y="2" width="13" height="3" fill="#5c86cb" />
          <path d="M2 7.5H15M2 10.5H15M6.5 5V13M11 5V13" stroke="#9db4dc" />
          <circle cx="3.5" cy="3.5" r="3" fill="#c14b3c" />
        </svg>
      </button>
      <Divider />
      <div className="ml-auto flex items-center gap-4">
        <span>平均值: May-01</span>
        <span>计数: 16</span>
        <span>求和: Oct-09</span>
        <Divider />
      </div>
      <div className="ml-1 flex items-center">
        <button
          type="button"
          aria-label="普通"
          className="flex size-[19px] items-center justify-center rounded-[2px] border border-[#c0892a] bg-[#fbd977]"
        >
          <svg width="13" height="11" viewBox="0 0 13 11" aria-hidden>
            <path
              d="M0.5 0.5H12.5V10.5H0.5ZM0.5 4H12.5M0.5 7H12.5M4.5 0.5V10.5M8.5 0.5V10.5"
              fill="#fff"
              stroke="#6b6250"
            />
          </svg>
        </button>
        <button type="button" aria-label="页面布局视图" className="flex w-[19px] justify-center">
          <svg width="14" height="13" viewBox="0 0 14 13" aria-hidden>
            <rect x="0.5" y="0.5" width="13" height="12" fill="#a9adb5" stroke="#62666e" />
            <rect x="3.5" y="2.5" width="7" height="8" fill="#fff" stroke="#62666e" />
            <path d="M5 5H9M5 7.5H9" stroke="#8a8d94" />
          </svg>
        </button>
        <button type="button" aria-label="分页预览" className="flex w-[19px] justify-center">
          <svg width="14" height="13" viewBox="0 0 14 13" aria-hidden>
            <rect x="0.5" y="0.5" width="13" height="12" fill="#a9adb5" stroke="#62666e" />
            <path d="M1 1H5V7H1ZM6 1H9V7H6Z" fill="#fff" />
            <path d="M5.5 1V7.5M1 7.5H9.5V1" fill="none" stroke="#62666e" />
          </svg>
        </button>
      </div>
      <span className="ml-2 w-[33px]">90%</span>
      <button type="button" aria-label="缩小">
        <svg width="17" height="17" viewBox="0 0 17 17" aria-hidden>
          <circle cx="8.5" cy="8.5" r="7" fill="#f4f5f7" stroke="#5b5f67" />
          <path d="M5 8.5H12" stroke="#3f434b" strokeWidth="2" />
        </svg>
      </button>
      <input
        type="range"
        aria-label="显示比例"
        min="0"
        max="100"
        defaultValue="45"
        className="h-3.5 w-[99px] appearance-none bg-transparent bg-[linear-gradient(#82868f,#82868f)] bg-[length:100%_1px] bg-center bg-no-repeat [&::-webkit-slider-thumb]:h-3 [&::-webkit-slider-thumb]:w-[9px] [&::-webkit-slider-thumb]:appearance-none [&::-webkit-slider-thumb]:rounded-b-[4px] [&::-webkit-slider-thumb]:border [&::-webkit-slider-thumb]:border-[#5b5f67] [&::-webkit-slider-thumb]:bg-[#f4f5f7]"
      />
      <button type="button" aria-label="放大" className="mr-1">
        <svg width="17" height="17" viewBox="0 0 17 17" aria-hidden>
          <circle cx="8.5" cy="8.5" r="7" fill="#f4f5f7" stroke="#5b5f67" />
          <path d="M5 8.5H12M8.5 5V12" stroke="#3f434b" strokeWidth="2" />
        </svg>
      </button>
    </footer>
  );
}

export default function App() {
  return (
    <div className={`flex h-screen flex-col overflow-hidden bg-black ${UI_FONT}`}>
      <Header />
      <Ribbon />
      <FormulaBar />
      <Sheet />
      <SheetTabs />
      <StatusBar />
      <p className="flex h-[62px] shrink-0 items-center justify-center pt-1 text-[24px] leading-8 text-white">
        现在的这个是复合条饼图
      </p>
    </div>
  );
}
